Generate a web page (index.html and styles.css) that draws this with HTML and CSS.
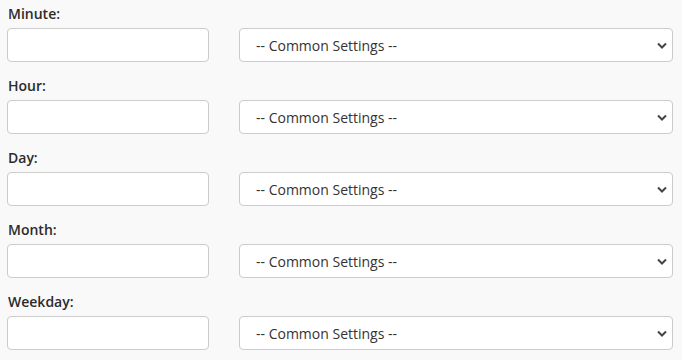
FILE: index.html
```html
<!DOCTYPE html>
<html lang="en">
<head>
<meta charset="UTF-8" />
<meta name="viewport" content="width=device-width, initial-scale=1" />
<title>Cron Settings</title>
<link rel="stylesheet" href="styles.css">
</head>
<body>
  <form class="cron-form">
    <div class="field">
      <label for="minute">Minute:</label>
      <div class="controls">
        <input type="text" id="minute" class="text-input">
        <select class="common-select">
          <option>-- Common Settings --</option>
        </select>
      </div>
    </div>
    <div class="field">
      <label for="hour">Hour:</label>
      <div class="controls">
        <input type="text" id="hour" class="text-input">
        <select class="common-select">
          <option>-- Common Settings --</option>
        </select>
      </div>
    </div>
    <div class="field">
      <label for="day">Day:</label>
      <div class="controls">
        <input type="text" id="day" class="text-input">
        <select class="common-select">
          <option>-- Common Settings --</option>
        </select>
      </div>
    </div>
    <div class="field">
      <label for="month">Month:</label>
      <div class="controls">
        <input type="text" id="month" class="text-input">
        <select class="common-select">
          <option>-- Common Settings --</option>
        </select>
      </div>
    </div>
    <div class="field">
      <label for="weekday">Weekday:</label>
      <div class="controls">
        <input type="text" id="weekday" class="text-input">
        <select class="common-select">
          <option>-- Common Settings --</option>
        </select>
      </div>
    </div>
  </form>
</body>
</html>
```

FILE: styles.css
```css
* { box-sizing: border-box; margin: 0; padding: 0; }
body {
  font-family: 'Open Sans', 'Liberation Sans', sans-serif;
  background: #f9f9f9;
  color: #333;
}

.cron-form { padding: 4px 9px 0 7px; }

/* One row per cron field */
.field { margin-bottom: 14px; }
.field label {
  display: block;
  font-size: 14px; font-weight: 600;
  line-height: 20px; color: #2b2b2b;
  padding-left: 1px; margin-bottom: 4px;
}
.controls {
  display: grid;
  grid-template-columns: 202px 1fr;
  column-gap: 30px;
}

.text-input, .common-select {
  height: 34px;
  border: 1px solid #ccc;
  border-radius: 4px;
  background-color: #fff;
  font-family: inherit; font-size: 14px; color: #333;
}
.text-input { padding: 0 10px; }

.common-select {
  appearance: none; -webkit-appearance: none;
  padding: 0 28px 0 16px;
  background-image: url("data:image/svg+xml,%3Csvg xmlns='http://www.w3.org/2000/svg' width='10' height='7' viewBox='0 0 10 7'%3E%3Cpath d='M1 1.5l4 4 4-4' fill='none' stroke='%23444' stroke-width='2'/%3E%3C/svg%3E");
  background-repeat: no-repeat;
  background-position: right 5px center;
}
```
